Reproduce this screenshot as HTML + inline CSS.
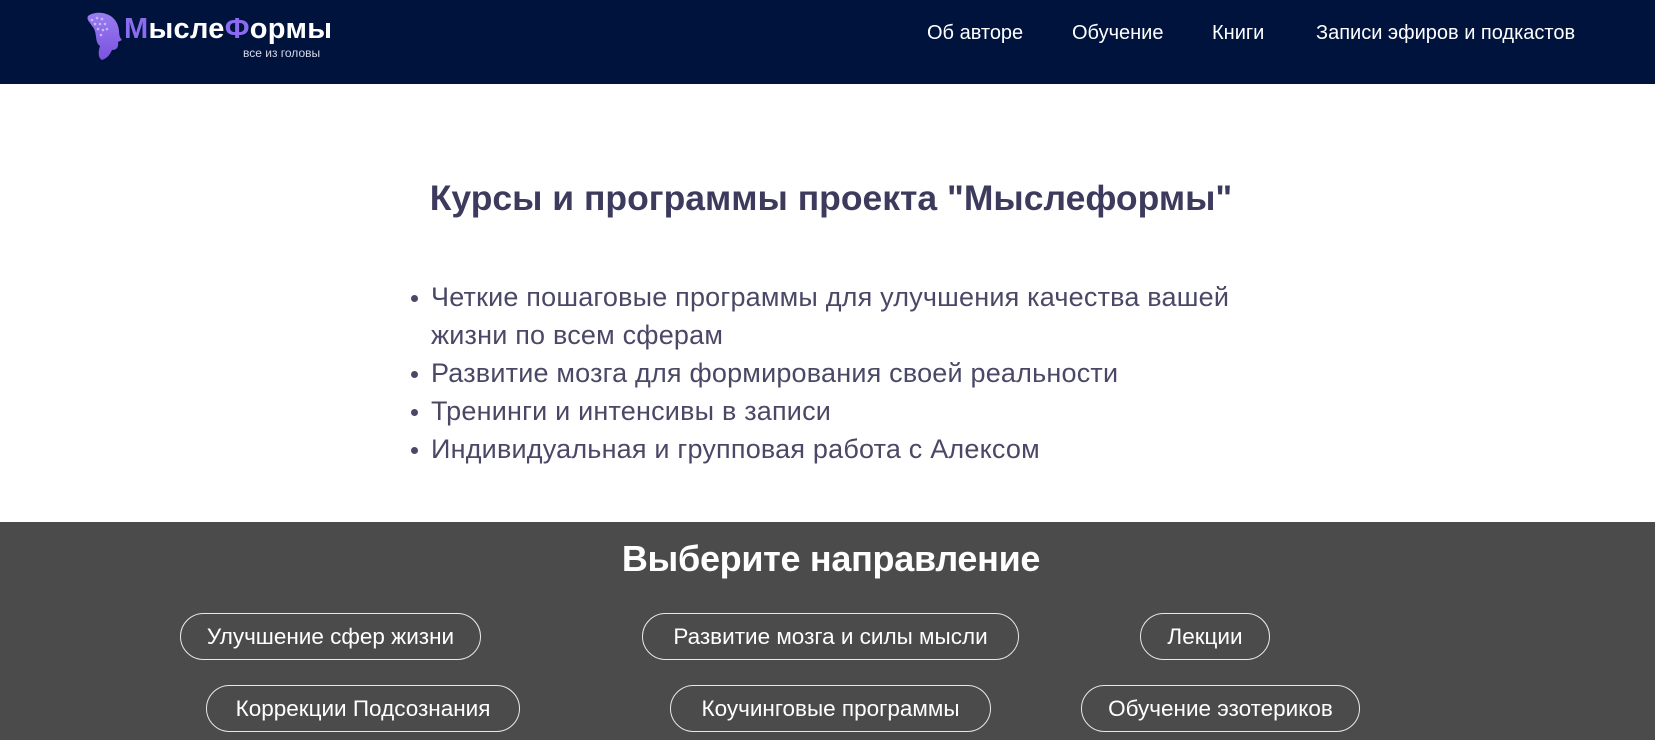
<!DOCTYPE html>
<html><head><meta charset="utf-8"><style>
*{margin:0;padding:0;box-sizing:border-box}
body{width:1655px;height:740px;overflow:hidden;background:#fff;font-family:"Liberation Sans",sans-serif;position:relative}
.hdr{position:absolute;left:0;top:0;width:1655px;height:84px;background:#00133d}
.nav{position:absolute;top:22px;color:#fff;font-size:20px;white-space:nowrap}
h1{position:absolute;left:0;width:1662px;top:178px;text-align:center;font-size:35.5px;font-weight:bold;color:#3d3b5d}
ul{position:absolute;left:431px;top:278px;width:830px;list-style:none;font-size:27px;letter-spacing:0.2px;line-height:38px;color:#4a4866}
li{position:relative}
li:before{content:"";position:absolute;left:-20px;top:17px;width:7px;height:7px;border-radius:50%;background:#4a4866}
.gray{position:absolute;left:0;top:522px;width:1655px;height:218px;background:#4b4b4b}
h2{position:absolute;left:0;width:1662px;top:538px;text-align:center;font-size:36px;font-weight:bold;color:#fff;letter-spacing:-0.3px}
.b{position:absolute;height:47px;border:1.5px solid #e8e8e8;border-radius:24px;color:#fff;font-size:22.5px;display:flex;align-items:center;justify-content:center;white-space:nowrap}
</style></head><body>
<div class="hdr">
<svg style="position:absolute;left:80px;top:10px" width="44" height="52" viewBox="0 0 44 52">
<defs><linearGradient id="g" x1="0" y1="0" x2="0" y2="1"><stop offset="0" stop-color="#9a7cf0"/><stop offset="1" stop-color="#7a52e0"/></linearGradient></defs>
<path d="M8 6 C16 0 34 2 38 16 C40 22 38 26 42 30 L38 32 C39 38 36 40 32 40 C30 44 28 48 22 50 C18 48 18 42 20 36 C14 32 18 22 12 16 C10 12 6 10 8 6Z" fill="url(#g)"/>
<g fill="#c8b8ff"><circle cx="12" cy="10" r="1.3"/><circle cx="17" cy="8" r="1.3"/><circle cx="22" cy="9" r="1.3"/><circle cx="15" cy="14" r="1.3"/><circle cx="20" cy="14" r="1.3"/><circle cx="25" cy="14" r="1.3"/><circle cx="18" cy="19" r="1.3"/><circle cx="23" cy="20" r="1.3"/><circle cx="27" cy="19" r="1.3"/><circle cx="21" cy="25" r="1.3"/></g>
</svg>
<div style="position:absolute;left:124px;top:13px;font-size:29px;font-weight:bold;color:#fff;letter-spacing:0.3px"><span style="color:#8b6cf0">М</span>ысле<span style="color:#8b6cf0">Ф</span>ормы</div>
<div style="position:absolute;left:243px;top:46px;font-size:12px;color:#d8d8e8">все из головы</div>
<div class="nav" style="left:927px">Об авторе</div>
<div class="nav" style="left:1072px">Обучение</div>
<div class="nav" style="left:1212px">Книги</div>
<div class="nav" style="left:1316px">Записи эфиров и подкастов</div>
</div>
<h1>Курсы и программы проекта "Мыслеформы"</h1>
<ul>
<li>Четкие пошаговые программы для улучшения качества вашей жизни по всем сферам</li>
<li>Развитие мозга для формирования своей реальности</li>
<li>Тренинги и интенсивы в записи</li>
<li>Индивидуальная и групповая работа с Алексом</li>
</ul>
<div class="gray"></div>
<h2>Выберите направление</h2>
<div class="b" style="left:180px;top:613px;width:301px">Улучшение сфер жизни</div>
<div class="b" style="left:642px;top:613px;width:377px">Развитие мозга и силы мысли</div>
<div class="b" style="left:1140px;top:613px;width:130px">Лекции</div>
<div class="b" style="left:206px;top:685px;width:314px">Коррекции Подсознания</div>
<div class="b" style="left:670px;top:685px;width:321px">Коучинговые программы</div>
<div class="b" style="left:1081px;top:685px;width:279px">Обучение эзотериков</div>
</body></html>
